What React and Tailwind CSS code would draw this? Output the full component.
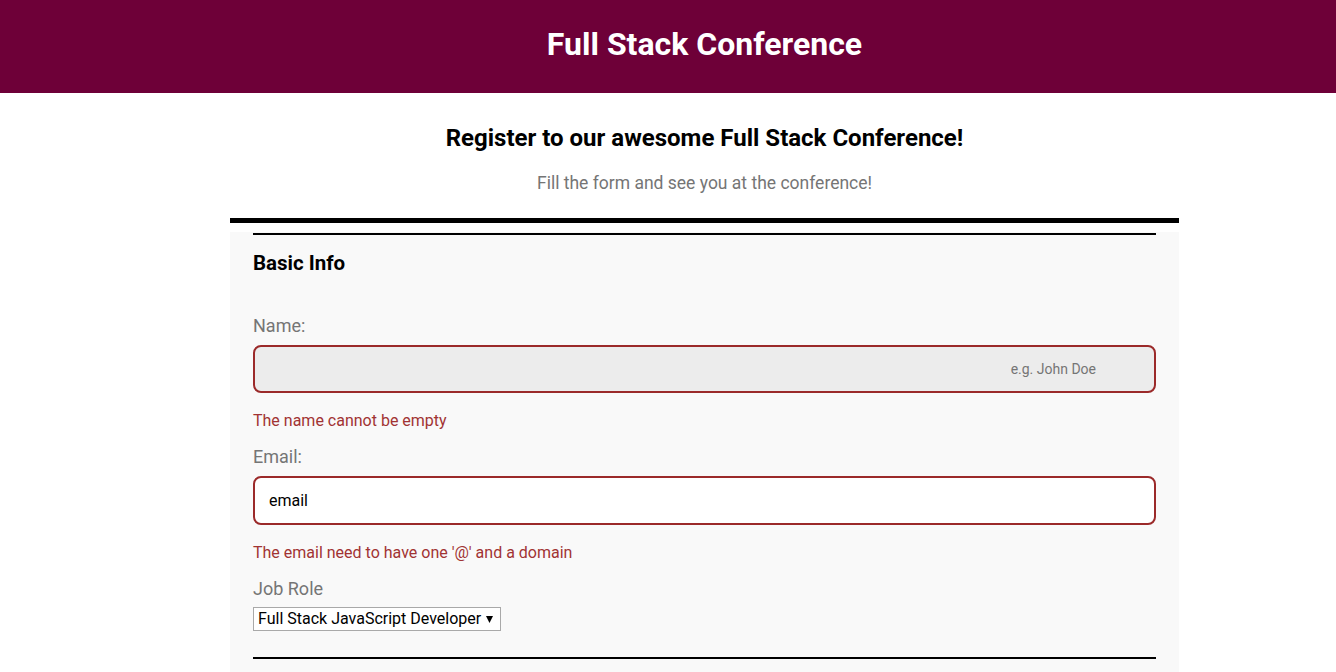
import React from "react";

function Field({label, children, error}) {
  return (
    <div>
      <label className="block text-[18px] leading-[22px] text-[#757575]">{label}</label>
      {children}
      {error && <p className="mt-[18px] text-[16px] leading-[20px] text-[#a13333]">{error}</p>}
    </div>
  );
}

export default function App() {
  return (
    <div className="min-h-[672px] bg-white font-['Roboto',sans-serif]">
      <header className="h-[93px] bg-[#6e0038] flex items-center justify-center pl-[73px]">
        <h1 className="text-[32px] font-bold text-white leading-none -mt-[5px]">Full Stack Conference</h1>
      </header>

      <div className="ml-[230px] w-[949px]">
        <div className="text-center pt-[30px]">
          <h2 className="text-[24px] font-bold text-black leading-[30px]">Register to our awesome Full Stack Conference!</h2>
          <p className="mt-[19px] text-[17.5px] leading-[22px] text-[#757575]">Fill the form and see you at the conference!</p>
        </div>
        <div className="mt-[24px] h-[5px] bg-black" />

        <form className="mt-[9px] bg-[#f9f9f9] px-[23px] pt-[1px] h-[460px]">
          <fieldset className="border-t-2 border-black">
            <h3 className="mt-[15px] text-[20.5px] font-bold leading-[26px] text-black">Basic Info</h3>

            <div className="mt-[39px]">
              <Field label="Name:" error="The name cannot be empty">
                <input
                  type="text"
                  placeholder="e.g. John Doe"
                  className="mt-[8px] block w-full h-[48px] rounded-[8px] border-2 border-[#9b2a2a] bg-[#ececec] pr-[58px] text-right text-[14px] outline-none placeholder:text-[#757575]"
                />
              </Field>
            </div>

            <div className="mt-[15px]">
              <Field label="Email:" error="The email need to have one '@' and a domain">
                <input
                  type="text"
                  defaultValue="email"
                  className="mt-[8px] block w-full h-[49px] rounded-[8px] border-2 border-[#9b2a2a] bg-white px-[14px] text-[16px] text-black outline-none"
                />
              </Field>
            </div>

            <div className="mt-[15px]">
              <label className="block text-[18px] leading-[22px] text-[#757575]">Job Role</label>
              <div className="mt-[7px] inline-flex items-center h-[24px] w-[248px] border border-[#a9a9a9] bg-white pl-[4px] pr-[7px] text-[16px] text-black">
                <span className="flex-1 leading-none">Full Stack JavaScript Developer</span>
                <svg width="7" height="7" viewBox="0 0 7 7"><path d="M0 0h7L3.5 7z" fill="#000" /></svg>
              </div>
            </div>

            <div className="mt-[26px] h-[2px] bg-black" />
          </fieldset>
        </form>
      </div>
    </div>
  );
}
